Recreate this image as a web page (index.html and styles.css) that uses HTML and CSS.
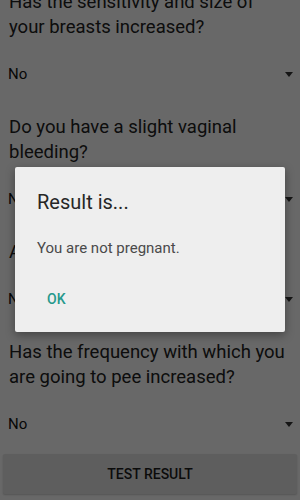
FILE: index.html
```html
<!DOCTYPE html>
<html>
<head>
<meta charset="utf-8">
<link rel="stylesheet" href="styles.css">
</head>
<body>
<div class="screen">
  <div class="form">
    <p class="question">Has the sensitivity and size of your breasts increased?</p>
    <div class="spinner"><span>No</span><span class="arrow"></span></div>
    <p class="question">Do you have a slight vaginal bleeding?</p>
    <div class="spinner"><span>No</span><span class="arrow"></span></div>
    <p class="question">Are you more tired than usual?</p>
    <div class="spinner"><span>No</span><span class="arrow"></span></div>
    <p class="question">Has the frequency with which you are going to pee increased?</p>
    <div class="spinner"><span>No</span><span class="arrow"></span></div>
    <div class="button">TEST RESULT</div>
  </div>
  <div class="scrim"></div>
  <div class="dialog">
    <div class="dialog-title">Result is...</div>
    <div class="dialog-body">You are not pregnant.</div>
    <div class="dialog-actions"><span class="dialog-btn">OK</span></div>
  </div>
</div>
</body>
</html>
```
FILE: styles.css
```css
html, body {
  margin: 0;
  padding: 0;
}
body {
  width: 300px;
  height: 500px;
  overflow: hidden;
  font-family: Roboto, "Noto Sans", sans-serif;
  background: #fafafa;
}
.screen {
  position: relative;
  width: 300px;
  height: 500px;
  overflow: hidden;
}
.form {
  display: flex;
  flex-direction: column;
  margin-top: -10px;
  padding: 0 8px 0 9px;
}
.question {
  margin: 17px 0 0 0;
  font-size: 18.5px;
  line-height: 25px;
  color: #212121;
}
.question:first-child {
  margin-top: 0;
}
.spinner {
  margin: 10px -3px 0 -1px;
  height: 48px;
  display: flex;
  align-items: center;
  justify-content: space-between;
  font-size: 15px;
  color: #111;
}
.arrow {
  width: 0;
  height: 0;
  border-left: 4.5px solid transparent;
  border-right: 4.5px solid transparent;
  border-top: 5px solid #333;
  margin-right: 2px;
}
.button {
  margin: 6px -5px 0 -6px;
  height: 40px;
  background: #e2e2e2;
  border-radius: 2px;
  display: flex;
  align-items: center;
  justify-content: center;
  font-size: 14px;
  font-weight: 500;
  color: #1c1c1c;
  box-shadow: 0 1px 2px rgba(0,0,0,0.2);
}
.scrim {
  position: absolute;
  inset: 0;
  background: rgba(0,0,0,0.585);
}
.dialog {
  position: absolute;
  left: 15px;
  top: 167px;
  width: 270px;
  height: 165px;
  background: #eeeeee;
  border-radius: 2px;
  box-shadow: 0 3px 10px rgba(0,0,0,0.35);
  display: flex;
  flex-direction: column;
  box-sizing: border-box;
  padding: 22px 22px 0 22px;
}
.dialog-title {
  font-size: 20px;
  line-height: 26px;
  color: #262626;
}
.dialog-body {
  margin-top: 23px;
  font-size: 15px;
  line-height: 20px;
  color: #4a4a4a;
}
.dialog-actions {
  margin-top: 33px;
  display: flex;
}
.dialog-btn {
  margin-left: 10px;
  font-size: 14px;
  font-weight: 500;
  color: #26998c;
}
```
